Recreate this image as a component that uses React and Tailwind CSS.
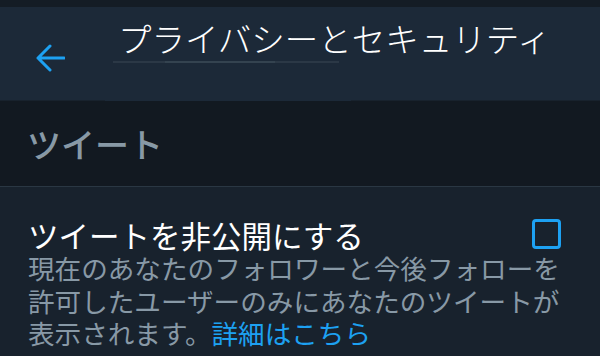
export default function App() {
  return (
    <div
      className="h-[356px] w-[600px] overflow-hidden bg-[#18222d]"
      style={{ fontFamily: '"Noto Sans CJK JP", "Noto Sans", sans-serif' }}
    >
      <div className="h-[7px] bg-[#141c25]" />
      <header className="flex h-[93px] items-start bg-[#1c2938]">
        <div className="ml-[35px] mt-[36px] w-[30px] shrink-0">
          <svg width="30" height="30" viewBox="0 0 30 30" fill="none">
            <path d="M29 15H3M15 3L3 15l12 12" stroke="#1da1f2" strokeWidth="3" strokeLinecap="round" strokeLinejoin="round" />
          </svg>
        </div>
        <div className="ml-[48px] mt-[12px] flex flex-col">
          <h1 className="ml-[5px] text-[33.5px] leading-[38px] font-light whitespace-nowrap text-white">
            プライバシーとセキュリティ
          </h1>
          <div className="mt-[4px] flex h-[2px] w-[226px] bg-[#2b3846]">
            <div className="ml-[52px] w-[110px] bg-[#344350]" />
          </div>
        </div>
      </header>
      <div className="ml-[105px] h-[1px] w-[246px] bg-[#1c2938]" />
      <section className="flex h-[86px] items-center border-b border-[#2a3743] bg-[#121921] px-[27px]">
        <h2 className="text-[34px] leading-none font-medium text-[#8899a6]">ツイート</h2>
      </section>
      <div className="flex flex-col pl-[28px] pr-[39px] pt-[30px]">
        <div className="flex items-start justify-between">
          <p className="text-[30.5px] leading-[36px] whitespace-nowrap text-white">ツイートを非公開にする</p>
          <div className="mt-[2px] h-[30px] w-[29px] shrink-0 rounded-[4px] border-[3px] border-[#1da1f2]" />
        </div>
        <p className="mt-[-1px] text-[26.6px] leading-[32.5px] whitespace-nowrap text-[#8899a6]">
          現在のあなたのフォロワーと今後フォローを
          <br />
          許可したユーザーのみにあなたのツイートが
          <br />
          表示されます。<span className="text-[#1da1f2]">詳細はこちら</span>
        </p>
      </div>
    </div>
  );
}
